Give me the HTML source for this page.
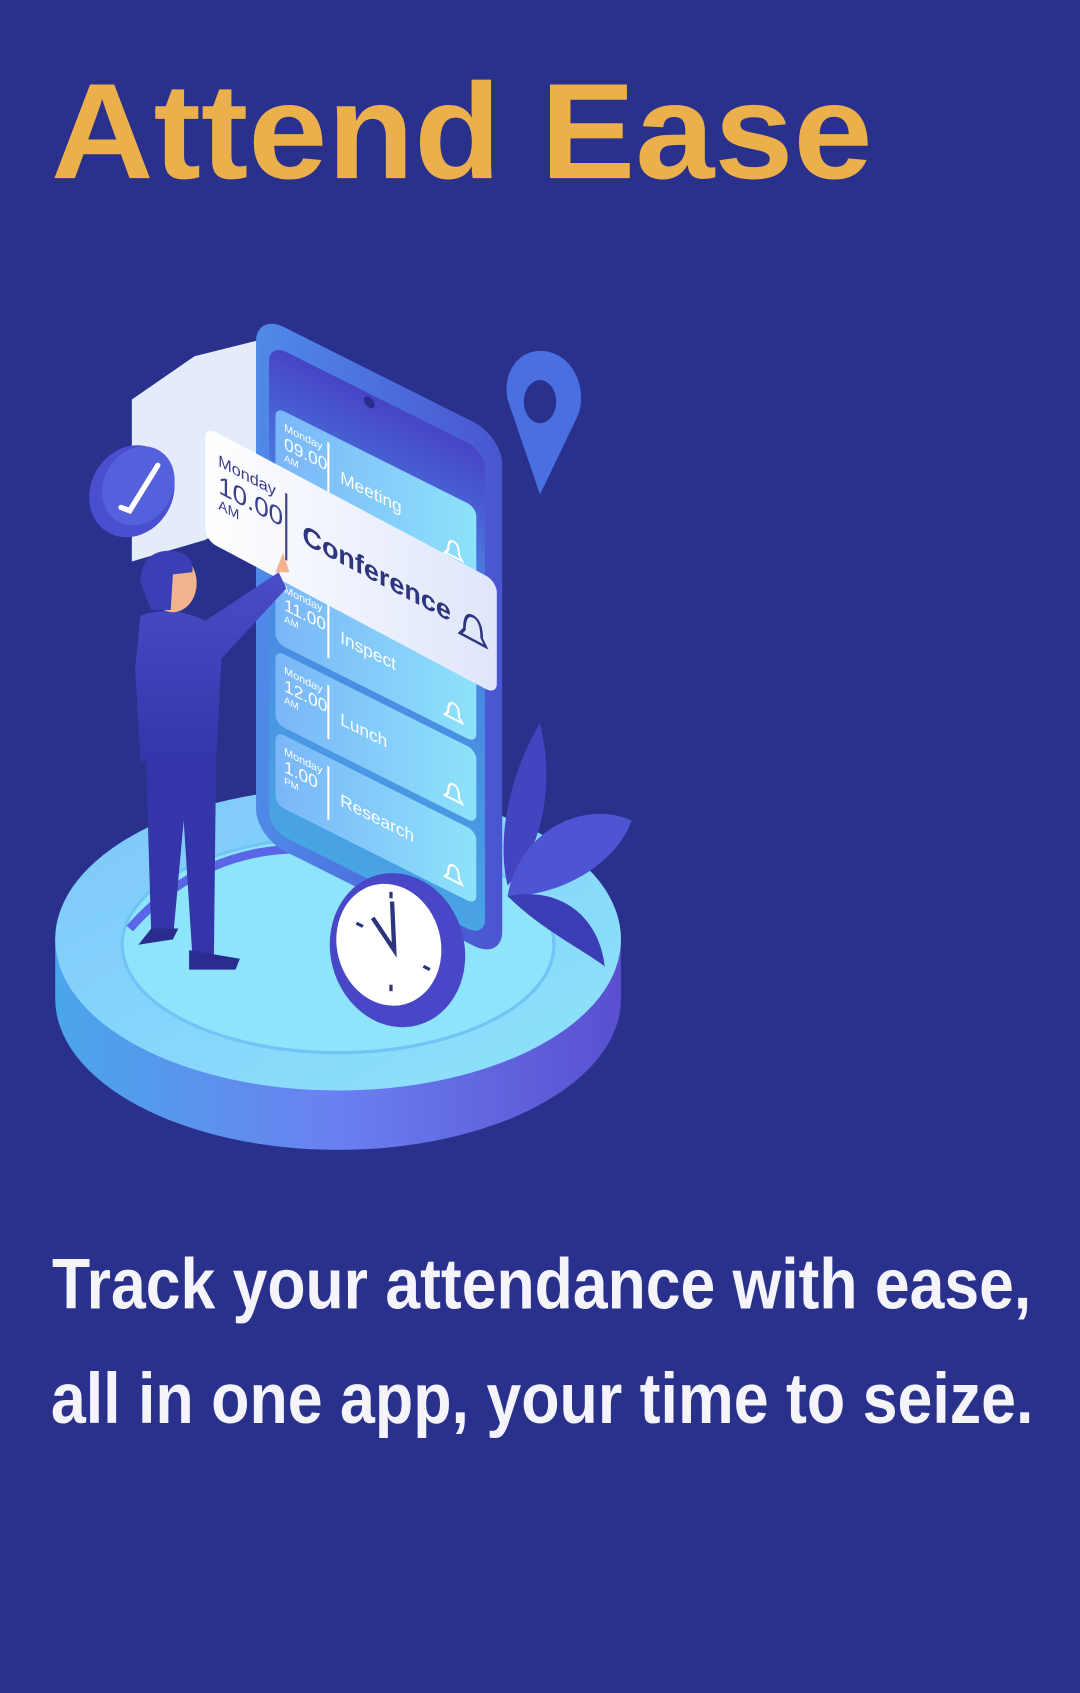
<!DOCTYPE html>
<html><head><meta charset="utf-8"><style>
html,body{margin:0;padding:0;background:#29318c;}
svg{display:block;}
</style></head><body>
<svg width="1080" height="1693" viewBox="0 0 1000 1568" xmlns="http://www.w3.org/2000/svg">
<defs>
<linearGradient id="side" x1="0" x2="1" y1="0" y2="0"><stop offset="0" stop-color="#4aa6ea"/><stop offset="0.5" stop-color="#6a80f0"/><stop offset="1" stop-color="#5a4fd0"/></linearGradient>
<linearGradient id="top" x1="0" x2="1" y1="0" y2="1"><stop offset="0" stop-color="#7ec6fb"/><stop offset="1" stop-color="#8fe4fb"/></linearGradient>
<linearGradient id="body" x1="0" x2="1"><stop offset="0" stop-color="#4f8ae8"/><stop offset="1" stop-color="#4a55d0"/></linearGradient>
<linearGradient id="scr" x1="0" x2="0" y1="0" y2="1"><stop offset="0" stop-color="#4744c6"/><stop offset="0.25" stop-color="#4a7ae0"/><stop offset="1" stop-color="#48a4e4"/></linearGradient>
<linearGradient id="card" x1="0" x2="1"><stop offset="0" stop-color="#7ab6f8"/><stop offset="1" stop-color="#8ee2fb"/></linearGradient>
<linearGradient id="wc" x1="0" x2="1"><stop offset="0" stop-color="#ffffff"/><stop offset="1" stop-color="#dfe6fb"/></linearGradient>
<linearGradient id="man" x1="0" x2="0" y1="0" y2="1"><stop offset="0" stop-color="#4a4cc8"/><stop offset="1" stop-color="#3336a8"/></linearGradient>
</defs>
<rect width="1000" height="1568" fill="#29318c"/>
<text x="47" y="165" font-family="Liberation Sans, sans-serif" font-weight="bold" font-size="126" fill="#ebb04b" textLength="761" lengthAdjust="spacingAndGlyphs">Attend  Ease</text>

<!-- platform -->
<path d="M51 870 A262 140 0 0 1 575 870 L575 925 A262 140 0 0 1 51 925 Z" fill="url(#side)"/>
<ellipse cx="313" cy="870" rx="262" ry="140" fill="url(#top)"/>
<ellipse cx="313" cy="875" rx="200" ry="100" fill="#8ee4fb" stroke="#73c3f7" stroke-width="3"/>
<path d="M120 860 Q200 770 320 790" fill="none" stroke="#5a66e6" stroke-width="8"/>

<!-- back white card -->
<path d="M122 370 L180 330 L240 315 L240 470 L190 500 L122 520 Z" fill="#e4ecfc"/>

<!-- phone -->
<g transform="translate(237,290) skewY(26.6)">
<rect x="0" y="0" width="228" height="485" rx="26" fill="url(#body)"/>
<rect x="12" y="22" width="200" height="450" rx="16" fill="url(#scr)"/>
<circle cx="105" cy="30" r="5" fill="#2a2e8a"/>
<g font-family="Liberation Sans, sans-serif" fill="#ffffff">
<rect x="18" y="78" width="186" height="70" rx="8" fill="url(#card)"/>
<text x="26" y="96" font-size="10">Monday</text><text x="26" y="113" font-size="16">09.00</text><text x="26" y="124" font-size="9">AM</text>
<rect x="66" y="86" width="2" height="52" fill="#fff"/>
<text x="78" y="118" font-size="16">Meeting</text>
<rect x="18" y="228" width="186" height="68" rx="8" fill="url(#card)"/>
<text x="26" y="246" font-size="10">Monday</text><text x="26" y="262" font-size="16">11.00</text><text x="26" y="273" font-size="9">AM</text>
<rect x="66" y="236" width="2" height="50" fill="#fff"/>
<text x="78" y="266" font-size="16">Inspect</text>
<rect x="18" y="303" width="186" height="68" rx="8" fill="url(#card)"/>
<text x="26" y="321" font-size="10">Monday</text><text x="26" y="337" font-size="16">12.00</text><text x="26" y="348" font-size="9">AM</text>
<rect x="66" y="311" width="2" height="50" fill="#fff"/>
<text x="78" y="342" font-size="16">Lunch</text>
<rect x="18" y="378" width="186" height="68" rx="8" fill="url(#card)"/>
<text x="26" y="396" font-size="10">Monday</text><text x="26" y="412" font-size="16">1.00</text><text x="26" y="423" font-size="9">PM</text>
<rect x="66" y="386" width="2" height="50" fill="#fff"/>
<text x="78" y="417" font-size="16">Research</text>
</g>
<g fill="none" stroke="#fff" stroke-width="2">
<path d="M178 130 q0-10 5-10 q5 0 5 10 l3 4 h-16 z"/>
<path d="M178 280 q0-10 5-10 q5 0 5 10 l3 4 h-16 z"/>
<path d="M178 355 q0-10 5-10 q5 0 5 10 l3 4 h-16 z"/>
<path d="M178 430 q0-10 5-10 q5 0 5 10 l3 4 h-16 z"/>
</g>
</g>

<!-- conference card -->
<g transform="translate(190,395) skewY(28)">
<rect x="0" y="0" width="270" height="105" rx="10" fill="url(#wc)"/>
<g font-family="Liberation Sans, sans-serif" fill="#3a3f8c">
<text x="12" y="30" font-size="15">Monday</text>
<text x="12" y="55" font-size="24">10.00</text>
<text x="12" y="70" font-size="13">AM</text>
<rect x="74" y="22" width="2" height="62" fill="#3a3f8c"/>
<text x="90" y="60" font-size="25" font-weight="bold" fill="#2f347e">Conference</text>
<path d="M240 60 q0 -16 8 -16 q8 0 8 16 l4 6 h-24 z" fill="none" stroke="#2f347e" stroke-width="2.5"/>
</g>
</g>

<!-- check icon -->
<ellipse cx="122" cy="455" rx="38" ry="44" fill="#4a4ed0" transform="rotate(30 122 455)"/>
<ellipse cx="128" cy="450" rx="32" ry="38" fill="#5560dc" transform="rotate(30 128 450)"/>
<path d="M112 470 l8 3 l26 -42" stroke="#fff" stroke-width="5" fill="none" stroke-linecap="round"/>

<!-- pin -->
<path d="M500 325 C530 325 545 360 535 385 L500 458 L470 370 C465 345 480 325 500 325 Z" fill="#4a6fe0"/>
<ellipse cx="500" cy="372" rx="15" ry="20" fill="#29318c"/>

<!-- leaves -->
<path d="M500 670 C470 720 460 780 470 820 C500 790 515 730 500 670 Z" fill="#4244c0"/>
<path d="M585 760 C540 740 480 770 470 830 C520 830 570 800 585 760 Z" fill="#4d55d4"/>
<path d="M470 830 C500 860 540 880 560 895 C555 850 520 820 470 830 Z" fill="#3b3db5"/>

<!-- man -->
<path d="M130 570 Q160 560 190 575 L258 530 L265 545 L205 610 L200 705 L130 705 L125 620 Z" fill="url(#man)"/>
<path d="M135 700 L200 700 L198 885 L178 885 L170 760 L160 870 L140 868 Z" fill="#3335a8"/>
<path d="M175 880 L222 888 L218 898 L175 898 Z" fill="#2a2c90"/>
<path d="M140 860 L165 860 L160 870 L128 875 Z" fill="#2a2c90"/>
<ellipse cx="160" cy="540" rx="22" ry="27" fill="#f2b48e"/>
<path d="M130 540 Q130 510 158 510 Q180 512 178 530 L160 532 L158 565 L140 565 Z" fill="#3b3fb5"/>
<path d="M255 530 L262 512 L268 530 Z" fill="#f2b48e"/>

<!-- clock -->
<ellipse cx="368" cy="880" rx="62" ry="72" fill="#4747c8" transform="rotate(-15 368 880)"/>
<ellipse cx="360" cy="875" rx="48" ry="57" fill="#ffffff" transform="rotate(-15 360 875)"/>
<path d="M345 850 L365 880 L363 835" stroke="#2f347e" stroke-width="4" fill="none"/>
<g stroke="#2f347e" stroke-width="3">
<line x1="330" y1="855" x2="336" y2="858"/><line x1="392" y1="895" x2="398" y2="898"/><line x1="362" y1="912" x2="362" y2="918"/><line x1="362" y1="826" x2="362" y2="832"/>
</g>

<g font-family="Liberation Sans, DejaVu Sans, sans-serif" font-weight="bold" fill="#f4f4fa">
<text x="48" y="1212" font-size="66" textLength="907" lengthAdjust="spacingAndGlyphs">Track your attendance with ease,</text>
<text x="47" y="1318" font-size="66" textLength="910" lengthAdjust="spacingAndGlyphs">all in one app, your time to seize.</text>
</g>
</svg>
</body></html>
